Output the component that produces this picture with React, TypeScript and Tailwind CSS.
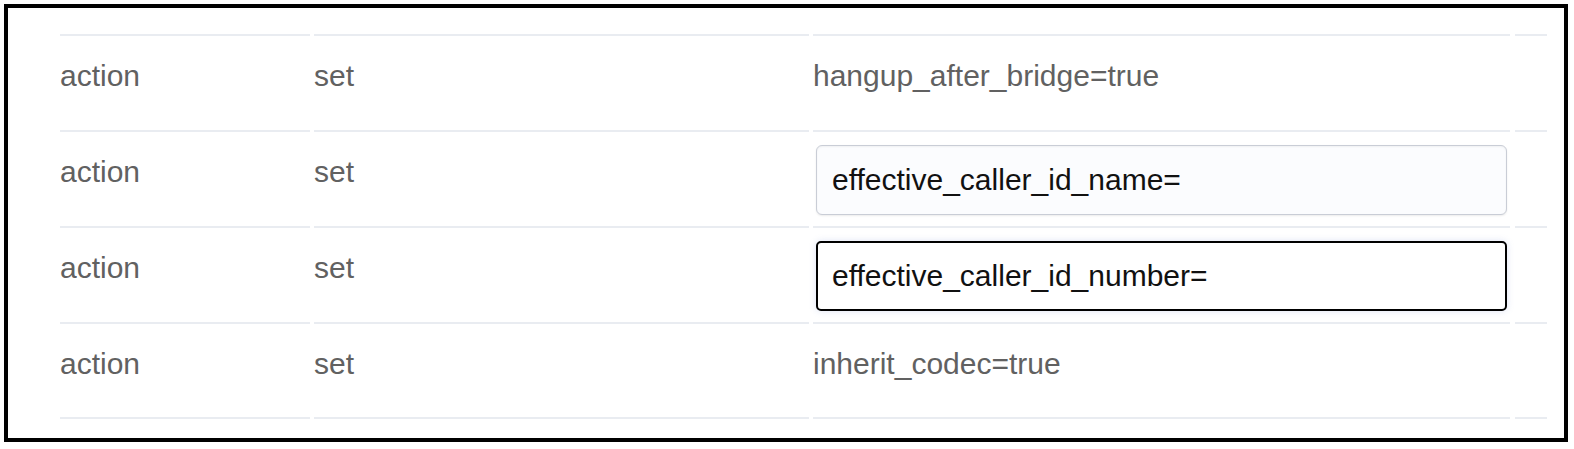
const rows = [
  { kind: "action", name: "set", data: "hangup_after_bridge=true", input: null as null | "idle" | "focus" },
  { kind: "action", name: "set", data: "effective_caller_id_name=", input: "idle" as const },
  { kind: "action", name: "set", data: "effective_caller_id_number=", input: "focus" as const },
  { kind: "action", name: "set", data: "inherit_codec=true", input: null },
];

const font = { fontFamily: '"Liberation Sans", Arial, sans-serif' };

export default function App() {
  return (
    <div className="w-[1574px] h-[449px] bg-white pl-[4px] pt-[4px]" style={font}>
      {/* outer frame */}
      <div className="w-[1564px] h-[438px] border-4 border-black pl-[52px] pt-[26px]">
        <div className="flex flex-col">
          {rows.map((r, i) => {
            const last = i === rows.length - 1;
            const cell = last
              ? "border-t-2 border-b-2 border-[#e9ecf1] h-[97px]"
              : "border-t-2 border-[#e9ecf1] h-[96px]";
            return (
              <div key={i} className="flex gap-[4px] text-[30px] leading-[42px] text-[#616161]">
                <div className={`${cell} w-[250px] pt-[19px]`}>{r.kind}</div>
                <div className={`${cell} w-[495px] pt-[19px]`}>{r.name}</div>
                <div className={`${cell} w-[697px] ${r.input ? "pt-[13px] pl-[3px]" : "pt-[19px]"}`}>
                  {r.input === "idle" && (
                    <input
                      readOnly
                      defaultValue={r.data}
                      className="w-[691px] h-[70px] rounded-[6px] border border-[#c9cdd6] bg-[#fbfcfe] pl-[15px] text-[30px] text-[#111] outline-none shadow-[inset_0_1px_2px_rgba(0,0,0,0.05),0_1px_2px_rgba(0,0,0,0.08)]"
                      style={font}
                    />
                  )}
                  {r.input === "focus" && (
                    <div className="relative w-[691px] h-[70px]">
                      <input
                        readOnly
                        defaultValue={r.data}
                        className="w-full h-full rounded-[5px] border-2 border-black bg-white pl-[14px] text-[30px] text-[#111] outline-none shadow-[0_0_7px_rgba(110,130,210,0.22)]"
                        style={font}
                      />
                    </div>
                  )}
                  {!r.input && r.data}
                </div>
                <div className={`${cell} w-[32px] ml-[1px]`} />
              </div>
            );
          })}
        </div>
      </div>
    </div>
  );
}
